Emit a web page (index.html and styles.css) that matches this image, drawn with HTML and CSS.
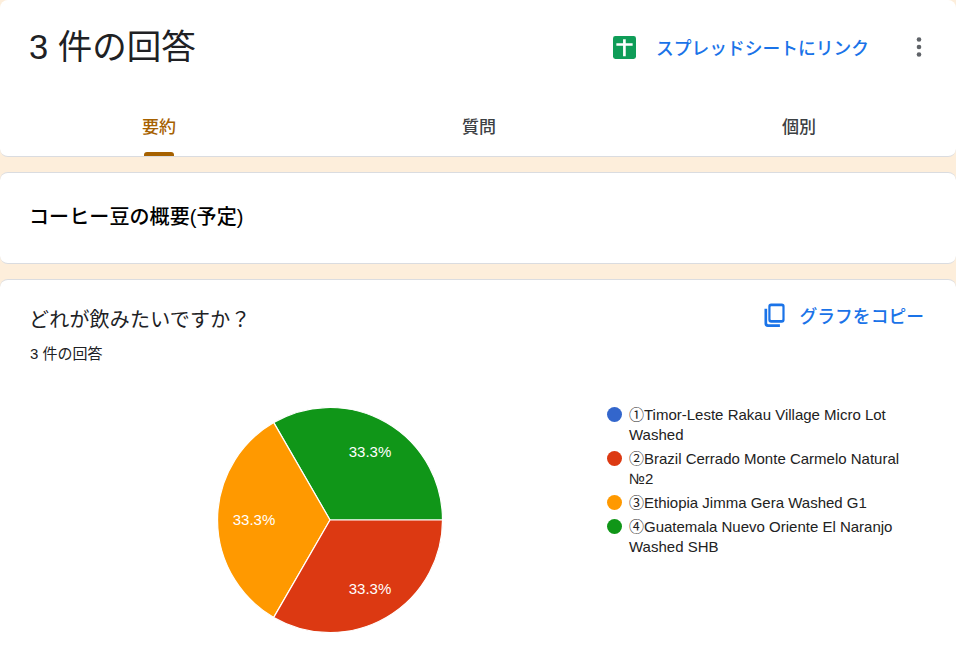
FILE: index.html
```html
<!DOCTYPE html>
<html lang="ja">
<head>
<meta charset="utf-8">
<title>3 件の回答</title>
<link rel="stylesheet" href="styles.css">
</head>
<body>
<section class="card header-card">
  <div class="title-row">
    <h1 class="title">3 件の回答</h1>
    <div class="actions">
      <svg class="sheet-icon" viewBox="0 0 24 24" aria-hidden="true">
        <rect x="0" y="0" width="24" height="24" rx="2.500" fill="#0f9d58"/>
        <path d="M3.500 7.500h7V3.500h2.800v4h7.200v2.600h-7.200V21h-2.800V10.100h-7z" fill="#fff"/>
      </svg>
      <a class="link sheet-link">スプレッドシートにリンク</a>
      <svg class="more-icon" viewBox="0 0 6 22" aria-hidden="true">
        <circle cx="3" cy="3.500" r="2.300"/><circle cx="3" cy="11" r="2.300"/><circle cx="3" cy="18.500" r="2.300"/>
      </svg>
    </div>
  </div>
  <nav class="tabs">
    <div class="tab active">要約<span class="indicator"></span></div>
    <div class="tab">質問</div>
    <div class="tab">個別</div>
  </nav>
</section>

<section class="card section-card">
  <h2 class="section-title">コーヒー豆の概要(予定)</h2>
</section>

<section class="card question-card">
  <div class="question-head">
    <div>
      <h3 class="question">どれが飲みたいですか？</h3>
      <p class="count">3 件の回答</p>
    </div>
    <div class="copy">
      <svg class="copy-icon" viewBox="0 0 24 26" aria-hidden="true">
        <path d="M7.500 1h11a3 3 0 0 1 3 3v14a3 3 0 0 1-3 3h-11a3 3 0 0 1-3-3V4a3 3 0 0 1 3-3zm0 2.800a.7.7 0 0 0-.7.7v13a.7.7 0 0 0 .7.7h11a.7.7 0 0 0 .7-.7v-13a.7.7 0 0 0-.7-.7z" fill="#1a73e8"/>
        <path d="M.500 6.500h2.800v14.800a1.300 1.300 0 0 0 1.300 1.300h12v2.800H4a3.500 3.500 0 0 1-3.500-3.500z" fill="#1a73e8"/>
      </svg>
      <a class="link copy-link">グラフをコピー</a>
    </div>
  </div>
  <div class="chart-row">
    <svg class="pie" viewBox="0 0 226 226" role="img" aria-label="円グラフ">
      <path d="M113 113L225.500 113A112.500 112.500 0 0 0 56.750 15.600z" fill="#109618" stroke="#fff" stroke-width="1.200"/>
      <path d="M113 113L56.750 15.600A112.500 112.500 0 0 0 56.750 210.400z" fill="#ff9900" stroke="#fff" stroke-width="1.200"/>
      <path d="M113 113L56.750 210.400A112.500 112.500 0 0 0 225.500 113z" fill="#dc3912" stroke="#fff" stroke-width="1.200"/>
      <text x="153" y="50">33.3%</text>
      <text x="37" y="118">33.3%</text>
      <text x="153" y="187">33.3%</text>
    </svg>
    <ul class="legend">
      <li><span class="dot blue"></span>①Timor-Leste Rakau Village Micro Lot Washed</li>
      <li><span class="dot red"></span>②Brazil Cerrado Monte Carmelo Natural №2</li>
      <li><span class="dot orange"></span>③Ethiopia Jimma Gera Washed G1</li>
      <li><span class="dot green"></span>④Guatemala Nuevo Oriente El Naranjo Washed SHB</li>
    </ul>
  </div>
</section>
</body>
</html>
```
FILE: styles.css
```css
* { box-sizing: border-box; }
html, body { height: 100%; }
body {
  margin: 0;
  height: 672px;
  overflow: hidden;
  background: #fdeedb;
  color: #202124;
  font-family: "Liberation Sans", "Noto Sans CJK JP", sans-serif;
}
.card {
  background: #fff;
  border: 1px solid #dadce0;
  border-radius: 8px;
}
.header-card {
  height: 157px;
  border-width: 0 0 1px;
  display: flex;
  flex-direction: column;
}
.title-row {
  display: flex;
  justify-content: space-between;
  align-items: center;
  height: 94px;
  padding: 0 34px 0 29px;
}
.title {
  margin: 0;
  font-size: 34.500px;
  font-weight: 400;
  line-height: 94px;
  color: #202124;
}
.actions { display: flex; align-items: center; }
.sheet-icon { width: 23px; height: 23px; }
.link {
  color: #1a73e8;
  font-size: 17.800px;
  font-weight: 500;
}
.sheet-link { margin-left: 20px; font-size: 17.750px; }
.more-icon { width: 6px; height: 22px; margin-left: 47px; fill: #5f6368; }
.tabs { display: grid; grid-template-columns: repeat(3, 320px); flex: 1; margin-left: -1px; }
.tab {
  position: relative;
  display: flex;
  justify-content: center;
  padding-top: 19px;
  font-size: 17px;
  font-weight: 500;
  color: #3c4043;
}
.tab.active { color: #a66100; }
.indicator {
  position: absolute;
  bottom: 0;
  left: 50%;
  width: 30px;
  height: 4px;
  margin-left: -15px;
  background: #a66100;
  border-radius: 3px 3px 0 0;
}
.section-card {
  height: 92px;
  margin-top: 15px;
  border-width: 1px 0;
  display: flex;
  align-items: center;
  padding: 0 29px 6px;
}
.section-title {
  margin: 0;
  font-size: 20px;
  font-weight: 500;
  letter-spacing: .1px;
  color: #000;
}
.question-card {
  height: 420px;
  margin-top: 15px;
  border-width: 1px 0 0;
  padding: 26px 32px 0 29px;
}
.question-head { display: flex; justify-content: space-between; align-items: flex-start; }
.question {
  margin: 0;
  font-size: 20px;
  font-weight: 400;
  line-height: 28px;
  letter-spacing: .2px;
}
.count {
  margin: 10px 0 0 1px;
  font-size: 15px;
  line-height: 20px;
}
.copy { display: flex; align-items: center; margin-top: -4px; }
.copy-icon { width: 23px; height: 26px; }
.copy-link { margin-left: 13px; }
.chart-row { position: relative; display: flex; margin-top: 32px; }
.pie { width: 226px; height: 226px; margin: 11px 0 0 188px; flex: none; }
.pie text {
  fill: #fff;
  font-size: 15px;
  text-anchor: middle;
  font-family: "Liberation Sans", sans-serif;
}
.legend {
  list-style: none;
  margin: 9px 0 0 164px;
  padding: 0;
  width: 305px;
  font-size: 15px;
  line-height: 20px;
  color: #222;
}
.legend li {
  position: relative;
  padding-left: 22px;
  margin-bottom: 4px;
}
.dot {
  position: absolute;
  left: 0;
  top: 2px;
  width: 15px;
  height: 15px;
  border-radius: 50%;
}
.blue { background: #3366cc; }
.red { background: #dc3912; }
.orange { background: #ff9900; }
.green { background: #109618; }
```
